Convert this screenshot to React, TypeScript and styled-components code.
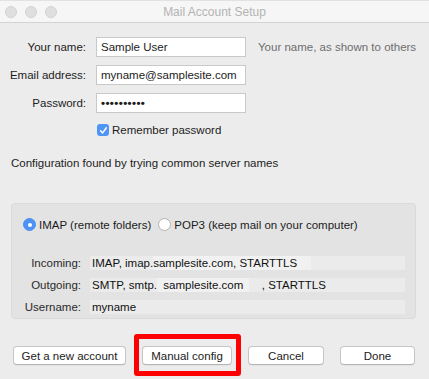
import React from "react";
import styled, { createGlobalStyle } from "styled-components";

const Global = createGlobalStyle`
  html, body { margin: 0; padding: 0; }
  body {
    background: #ececec;
    font-family: "Liberation Sans", Arial, Helvetica, sans-serif;
    font-size: 11.5px;
    color: #1c1c1c;
  }
`;

const Window = styled.div`
  width: 429px;
  height: 379px;
  background: #ececec;
  display: flex;
  flex-direction: column;
  overflow: hidden;
`;

const TitleBar = styled.div`
  flex: none;
  background: #f6f6f6;
  border-top: 1px solid #e2e2e2;
  border-bottom: 1px solid #d3d3d3;
  box-sizing: border-box;
  height: 23px;
  display: flex;
  align-items: center;
  position: relative;
`;

const Lights = styled.div`
  display: flex;
  gap: 8px;
  padding-left: 5px;
`;

const Light = styled.span`
  width: 12px;
  height: 12px;
  border-radius: 50%;
  background: #dfdfdf;
  box-sizing: border-box;
  border: 1px solid #d2d2d2;
`;

const Title = styled.div`
  position: absolute;
  left: 0;
  right: 0;
  text-align: center;
  font-size: 12px;
  color: #b3b3b3;
  top: 4px;
  pointer-events: none;
`;

const Form = styled.div`
  display: grid;
  grid-template-columns: 86px 150px auto;
  grid-auto-rows: 20px;
  column-gap: 10px;
  row-gap: 8px;
  margin-top: 14px;
`;

const Label = styled.label`
  text-align: right;
  align-self: center;
  color: #1c1c1c;
`;

const Input = styled.div`
  box-sizing: border-box;
  background: #fff;
  border: 1px solid #c9c9c9;
  padding: 0 4px;
  display: flex;
  align-items: center;
  height: 20px;
  color: #1c1c1c;
`;

const Dots = styled.span`
  font-size: 11.5px;
  letter-spacing: 0.4px;
  font-weight: bold;
`;

const Hint = styled.span`
  align-self: center;
  color: #6e6e6e;
  margin-left: 2px;
  white-space: nowrap;
`;

const CheckRow = styled.div`
  grid-column: 2 / span 2;
  display: flex;
  align-items: center;
  gap: 3px;
  height: 12px;
  margin-top: 3px;
  margin-left: 1px;
`;

const CheckBox = styled.span`
  width: 12px;
  height: 12px;
  border-radius: 3px;
  background: #4f95f6;
  display: flex;
  align-items: center;
  justify-content: center;
`;

const Notice = styled.div`
  margin-top: 15px;
  padding-left: 11px;
  line-height: 14px;
  white-space: nowrap;
`;

const Panel = styled.div`
  margin: 33px 13px 0 11px;
  background: #e3e3e3;
  border: 1px solid #dadada;
  border-radius: 4px;
  padding: 14px 10px 4px 11px;
`;

const RadioRow = styled.div`
  display: flex;
  align-items: center;
  height: 13px;
`;

const RadioItem = styled.div`
  display: flex;
  align-items: center;
  gap: 3px;
  margin-right: 7px;
  white-space: nowrap;
`;

const Radio = styled.span<{ $on?: boolean }>`
  width: 13px;
  height: 13px;
  box-sizing: border-box;
  border-radius: 50%;
  background: ${(p) => (p.$on ? "#4d93f7" : "#ffffff")};
  border: 1px solid ${(p) => (p.$on ? "#4a8ef0" : "#b3b3b3")};
  display: flex;
  align-items: center;
  justify-content: center;
  &::after {
    content: "";
    width: 4px;
    height: 4px;
    border-radius: 50%;
    background: ${(p) => (p.$on ? "#ffffff" : "transparent")};
  }
`;

const Details = styled.div`
  display: grid;
  grid-template-columns: 58px 1fr;
  grid-auto-rows: 14px;
  column-gap: 9px;
  row-gap: 8px;
  margin-top: 25px;
`;

const DLabel = styled.span`
  text-align: right;
  align-self: center;
  color: #2a2a2a;
  white-space: nowrap;
`;

const Value = styled.div`
  background: #ebebeb;
  display: flex;
  align-items: center;
  padding-left: 2px;
  white-space: pre;
  color: #111;
  line-height: 14px;
`;

const Patch = styled.span<{ $w: number }>`
  display: inline-block;
  width: ${(p) => p.$w}px;
  height: 14px;
  line-height: 14px;
  background: #f1f1f1;
  white-space: pre;
`;

const Buttons = styled.div`
  display: flex;
  gap: 16px;
  margin-top: 27px;
  padding-left: 13px;
`;

const Button = styled.button<{ $w: number }>`
  width: ${(p) => p.$w}px;
  height: 19px;
  box-sizing: border-box;
  background: #ffffff;
  border: 1px solid #c6c6c6;
  border-bottom-color: #b5b5b5;
  border-radius: 4px;
  box-shadow: 0 0.5px 0.5px rgba(0, 0, 0, 0.08);
  font-family: "Liberation Sans", Arial, sans-serif;
  font-size: 11.5px;
  color: #1c1c1c;
  padding: 0;
  display: flex;
  align-items: center;
  justify-content: center;
`;

const Highlight = styled.div`
  position: relative;
  display: flex;
`;

const Ring = styled.span`
  position: absolute;
  top: -12px;
  left: -8px;
  right: -9px;
  bottom: -11px;
  border: 5px solid #ff0000;
  border-radius: 3px;
  pointer-events: none;
`;

export default function App() {
  return (
    <>
      <Global />
      <Window>
        <TitleBar>
          <Lights>
            <Light />
            <Light />
            <Light />
          </Lights>
          <Title>Mail Account Setup</Title>
        </TitleBar>

        <Form>
          <Label>Your name:</Label>
          <Input>Sample User</Input>
          <Hint>Your name, as shown to others</Hint>

          <Label>Email address:</Label>
          <Input>myname@samplesite.com</Input>
          <span />

          <Label>Password:</Label>
          <Input>
            <Dots>••••••••••</Dots>
          </Input>
          <span />

          <span />
          <CheckRow>
            <CheckBox>
              <svg width="9" height="9" viewBox="0 0 9 9">
                <path
                  d="M1.6 4.8 L3.6 6.9 L7.4 1.8"
                  fill="none"
                  stroke="#fff"
                  strokeWidth="1.5"
                  strokeLinecap="round"
                  strokeLinejoin="round"
                />
              </svg>
            </CheckBox>
            <span>Remember password</span>
          </CheckRow>
        </Form>

        <Notice>Configuration found by trying common server names</Notice>

        <Panel>
          <RadioRow>
            <RadioItem>
              <Radio $on />
              <span>IMAP (remote folders)</span>
            </RadioItem>
            <RadioItem>
              <Radio />
              <span>POP3 (keep mail on your computer)</span>
            </RadioItem>
          </RadioRow>

          <Details>
            <DLabel>Incoming:</DLabel>
            <Value>
              IMAP, imap.<Patch $w={158}>samplesite.com, STARTTLS</Patch>
            </Value>

            <DLabel>Outgoing:</DLabel>
            <Value>
              SMTP, smtp.<Patch $w={92}>  samplesite.com</Patch>    , STARTTLS
            </Value>

            <DLabel>Username:</DLabel>
            <Value>myname</Value>
          </Details>
        </Panel>

        <Buttons>
          <Button $w={113}>Get a new account</Button>
          <Highlight>
            <Button $w={90}>Manual config</Button>
            <Ring />
          </Highlight>
          <Button $w={76}>Cancel</Button>
          <Button $w={75}>Done</Button>
        </Buttons>
      </Window>
    </>
  );
}
